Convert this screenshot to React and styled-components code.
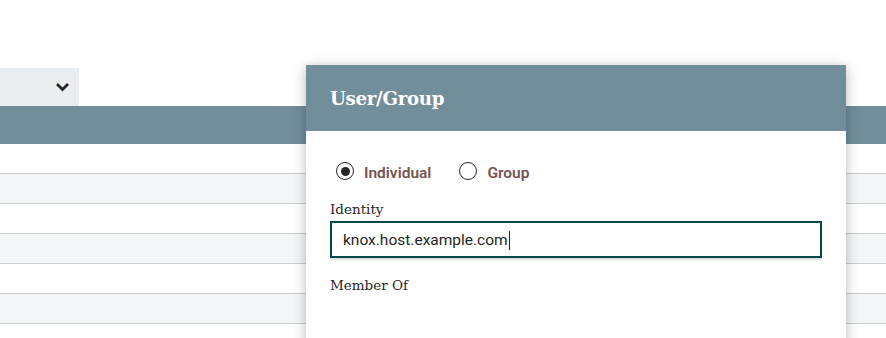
import React from 'react';
import styled, { createGlobalStyle } from 'styled-components';

const GlobalStyle = createGlobalStyle`
  html, body {
    margin: 0;
    padding: 0;
    background: #fff;
  }
  body {
    font-family: Roboto, "Noto Sans", sans-serif;
    color: #262626;
  }
`;

const Page = styled.div`
  position: relative;
  width: 886px;
  height: 338px;
  overflow: hidden;
  background: #fff;
  padding-top: 68px;
  box-sizing: border-box;
`;

const Toolbar = styled.div`
  display: flex;
  height: 38px;
`;

const Select = styled.div`
  width: 79px;
  height: 38px;
  background: #e9edf0;
  display: flex;
  align-items: center;
  justify-content: flex-end;
  padding-right: 9px;
  box-sizing: border-box;
`;

const TableHead = styled.div`
  height: 38px;
  background: #728e9b;
`;

const Row = styled.div`
  height: 29px;
  border-bottom: 1px solid #c7cdd0;
  background: ${(p) => (p.$odd ? '#f4f5f7' : '#fff')};
`;

const Dialog = styled.div`
  position: absolute;
  left: 306px;
  top: 65px;
  width: 540px;
  height: 320px;
  background: #fff;
  box-shadow: 0 2px 12px rgba(0, 0, 0, 0.28);
`;

const DialogHeader = styled.div`
  height: 66px;
  background: #728e9b;
  display: flex;
  align-items: center;
  padding-left: 24px;
`;

const Title = styled.h2`
  margin: 0;
  color: #fff;
  font-family: "DejaVu Serif", serif;
  font-weight: bold;
  font-size: 18.2px;
  letter-spacing: -0.3px;
`;

const DialogBody = styled.div`
  padding: 29px 24px 0 24px;
`;

const RadioGroup = styled.div`
  display: flex;
  align-items: center;
  gap: 28px;
  padding-left: 6px;
`;

const RadioOption = styled.label`
  display: flex;
  align-items: center;
  gap: 10px;
  font-size: 15.5px;
  font-weight: 600;
  color: #775351;
  line-height: 18px;
  padding-top: 4px;
`;

const RadioCircle = styled.span`
  width: 18px;
  height: 18px;
  margin-top: -4px;
  border: 1.5px solid #262626;
  border-radius: 50%;
  box-sizing: border-box;
  display: flex;
  align-items: center;
  justify-content: center;
  &::after {
    content: '';
    width: 9px;
    height: 9px;
    border-radius: 50%;
    background: #262626;
    display: ${(p) => (p.$checked ? 'block' : 'none')};
  }
`;

const FieldLabel = styled.div`
  font-family: "DejaVu Serif", serif;
  font-size: 13.5px;
  color: #262626;
  margin-top: ${(p) => p.$top}px;
  line-height: 16px;
`;

const Field = styled.div`
  margin-top: 4px;
  width: 492px;
  height: 37px;
  border: 2px solid #004849;
  box-sizing: border-box;
  box-shadow: 0 2px 1px rgba(0, 0, 0, 0.12);
  display: flex;
  align-items: center;
  padding-left: 11px;
  padding-top: 1px;
  font-size: 15.5px;
  color: #262626;
`;

const Caret = styled.span`
  display: inline-block;
  width: 1px;
  height: 19px;
  background: #262626;
  margin-left: 1px;
`;

const Chevron = () => (
  <svg width="15" height="10" viewBox="0 0 15 10">
    <path d="M2 2 L7.5 7.5 L13 2" fill="none" stroke="#262626" strokeWidth="2.8" />
  </svg>
);

export default function App() {
  return (
    <>
      <GlobalStyle />
      <Page>
        <Toolbar>
          <Select>
            <Chevron />
          </Select>
        </Toolbar>
        <TableHead />
        {[0, 1, 2, 3, 4, 5].map((i) => (
          <Row key={i} $odd={i % 2 === 1} />
        ))}
        <Dialog>
          <DialogHeader>
            <Title>User/Group</Title>
          </DialogHeader>
          <DialogBody>
            <RadioGroup>
              <RadioOption>
                <RadioCircle $checked />
                Individual
              </RadioOption>
              <RadioOption>
                <RadioCircle />
                Group
              </RadioOption>
            </RadioGroup>
            <FieldLabel $top={19}>Identity</FieldLabel>
            <Field>
              knox.host.example.com
              <Caret />
            </Field>
            <FieldLabel $top={19}>Member Of</FieldLabel>
          </DialogBody>
        </Dialog>
      </Page>
    </>
  );
}
